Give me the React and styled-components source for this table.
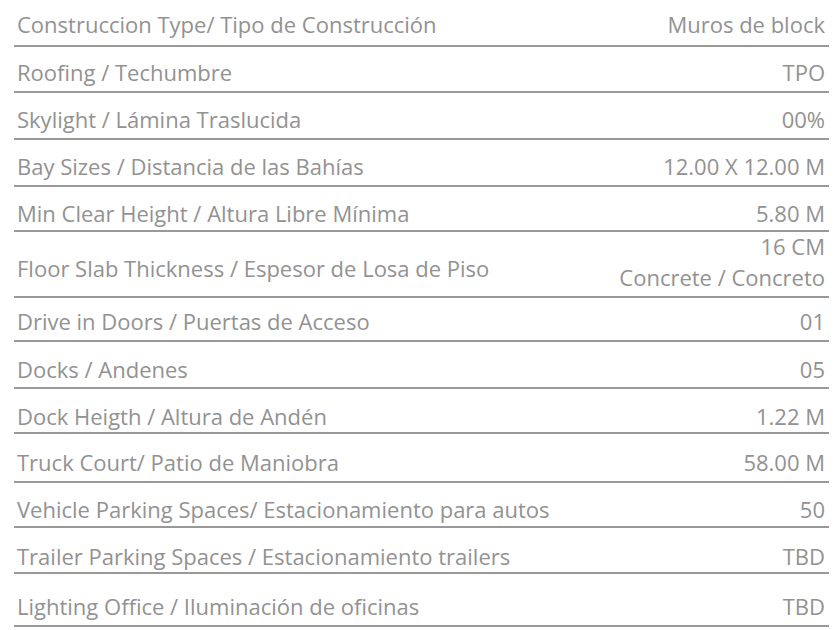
import styled, { createGlobalStyle } from 'styled-components';

const specs = [
  { label: 'Construccion Type/ Tipo de Construcción', value: ['Muros de block'], h: 47, pb: 8 },
  { label: 'Roofing / Techumbre', value: ['TPO'], h: 46, pb: 6 },
  { label: 'Skylight / Lámina Traslucida', value: ['00%'], h: 47, pb: 6 },
  { label: 'Bay Sizes / Distancia de las Bahías', value: ['12.00 X 12.00 M'], h: 47, pb: 6 },
  { label: 'Min Clear Height / Altura Libre Mínima', value: ['5.80 M'], h: 45, pb: 4 },
  { label: 'Floor Slab Thickness / Espesor de Losa de Piso', value: ['16 CM', 'Concrete / Concreto'], h: 66, pb: 3, center: true },
  { label: 'Drive in Doors / Puertas de Acceso', value: ['01'], h: 44, pb: 6 },
  { label: 'Docks / Andenes', value: ['05'], h: 47, pb: 5 },
  { label: 'Dock Heigth / Altura de Andén', value: ['1.22 M'], h: 45, pb: 3 },
  { label: 'Truck Court/ Patio de Maniobra', value: ['58.00 M'], h: 49, pb: 6 },
  { label: 'Vehicle Parking Spaces/ Estacionamiento para autos', value: ['50'], h: 45, pb: 4 },
  { label: 'Trailer Parking Spaces / Estacionamiento trailers', value: ['TBD'], h: 46, pb: 3 },
  { label: 'Lighting Office / Iluminación de oficinas', value: ['TBD'], h: 53, pb: 6 },
];

export default function App() {
  return (
    <>
      <GlobalStyle />
      <S_Table>
        {specs.map((s) => (
          <S_Row key={s.label} $h={s.h} $pb={s.pb}>
            <S_Label $center={s.center}>{s.label}</S_Label>
            <S_Value>
              {s.value.map((v) => (
                <S_ValueLine key={v} $tall={s.value.length > 1}>{v}</S_ValueLine>
              ))}
            </S_Value>
          </S_Row>
        ))}
      </S_Table>
    </>
  );
}

const GlobalStyle = createGlobalStyle`
  body {
    margin: 0;
    background: #fff;
    font-family: "Open Sans", "Liberation Sans", sans-serif;
  }
`
const S_Table = styled.div`
  width: 815px;
  margin-left: 14px;
  color: #929292;
  font-size: 22px;
  font-weight: 400;
`
const S_Row = styled.div`
  display: flex;
  justify-content: space-between;
  align-items: flex-end;
  box-sizing: border-box;
  height: ${(p) => p.$h}px;
  padding: 0 4px ${(p) => p.$pb}px 3px;
  border-bottom: 2px solid #999;
  line-height: 26px;
`
const S_Label = styled.div`
  white-space: nowrap;
  align-self: ${(p) => (p.$center ? 'center' : 'flex-end')};
  margin-top: ${(p) => (p.$center ? '10px' : '0')};
`
const S_Value = styled.div`
  text-align: right;
  white-space: nowrap;
`
const S_ValueLine = styled.div`
  line-height: ${(p) => (p.$tall ? '31px' : '26px')};
`
